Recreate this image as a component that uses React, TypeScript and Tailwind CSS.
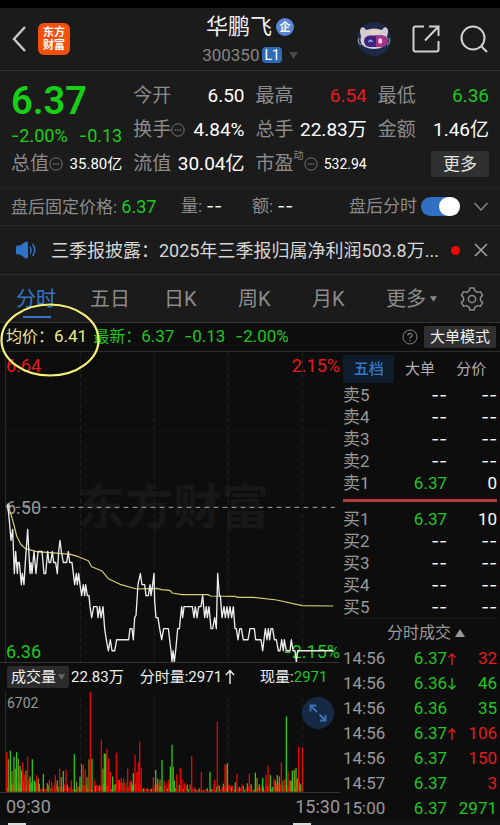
import React from "react";

const RED = "#e31b1b";
const GREEN = "#1fc71f";

/* Minute line: [x, ticks of 0.01 below the previous close] in chart units */
const priceLine: [number, number][] = [
  [24, 0], [28, 1.2], [33, 3], [38, 2], [43, 6], [47, 4], [52, 6], [54, 5], [58, 5], [64, 7], [67, 6], [72, 7], [76, 5], [83, 2],
  [90, 6], [93, 5], [96, 6], [102, 4], [108, 6], [114, 4], [126, 4], [132, 6], [137, 6], [143, 4], [147, 5], [152, 5], [157, 4],
  [161, 5], [167, 5], [172, 6], [176, 4], [180, 3], [184, 4], [190, 5], [200, 5], [205, 4], [209, 5], [216, 5], [220, 6], [224, 7],
  [229, 6], [232, 7], [236, 6], [240, 7], [245, 8], [250, 7], [254, 8], [257, 7], [262, 8], [267, 8], [270, 9], [275, 10], [281, 9],
  [291, 9], [294, 10], [299, 9], [303, 10], [309, 9], [314, 11], [319, 12], [325, 13], [331, 12], [336, 13], [344, 13], [350, 12],
  [386, 12], [390, 11], [396, 11], [400, 12], [404, 10], [408, 9.8], [414, 7], [421, 6], [426, 7], [434, 7], [438, 8], [445, 8],
  [450, 7], [453, 8], [458, 7], [462, 6], [464, 8.5], [468, 10], [474, 10], [479, 11], [485, 12], [491, 11], [505, 11], [509, 12],
  [513, 13], [516, 14], [519, 13], [523, 14], [527, 13], [533, 11], [538, 11], [545, 9], [548, 10], [552, 9], [577, 9], [582, 10],
  [586, 9], [591, 10], [596, 9], [603, 9], [608, 8], [614, 10], [619, 9], [622, 10], [627, 9], [633, 11], [638, 11], [644, 10],
  [649, 11], [653, 6], [658, 8], [661, 8], [666, 10], [672, 9], [676, 10], [681, 9], [685, 10], [690, 9], [695, 10], [700, 9],
  [705, 11], [709, 11], [714, 12], [719, 11], [724, 11], [730, 12], [744, 12], [750, 11], [763, 11], [767, 12], [783, 12], [788, 13],
  [796, 11], [801, 12], [805, 11], [809, 12], [813, 11], [818, 11], [823, 12], [829, 12], [835, 13], [840, 13], [845, 12], [850, 13],
  [853, 12], [859, 13], [870, 13], [874, 12], [879, 13], [885, 13], [889, 14], [893, 13], [1000, 13],
];

/* Average price line: [x, y] in chart units */
const averageLine: [number, number][] = [
  [24, 458], [32, 484], [42, 519], [50, 552], [62, 576], [76, 590], [110, 599], [150, 602], [212, 607], [235, 614], [265, 626],
  [275, 644], [305, 656], [325, 680], [360, 697], [410, 711], [470, 709], [485, 713], [509, 715], [517, 723], [545, 728],
  [625, 728], [632, 732], [705, 733], [713, 736], [760, 736], [830, 744], [907, 761], [1000, 762],
];

/* Volume peaks: [x, height, colour] in volume chart units */
const peaks: [number, number, "r" | "g" | "o"][] = [
  [20, 120, "r"], [25, 98, "o"], [31, 124, "g"], [36, 62, "o"], [42, 106, "g"], [46, 70, "o"], [50, 120, "g"], [55, 100, "o"],
  [60, 78, "g"], [64, 64, "g"], [68, 88, "r"], [73, 52, "r"], [78, 64, "o"], [83, 106, "r"], [90, 46, "g"], [97, 98, "g"],
  [104, 34, "g"], [110, 50, "r"], [115, 40, "o"], [130, 54, "g"], [148, 36, "r"], [155, 30, "r"], [166, 50, "r"], [172, 34, "o"],
  [179, 70, "r"], [184, 44, "o"], [190, 62, "g"], [198, 66, "r"], [214, 34, "r"], [223, 114, "g"], [230, 30, "o"], [240, 46, "g"],
  [245, 84, "o"], [250, 80, "r"], [256, 68, "r"], [261, 44, "o"], [267, 98, "o"], [271, 302, "r"], [276, 100, "g"], [283, 34, "r"],
  [304, 158, "r"], [309, 70, "o"], [313, 116, "g"], [317, 114, "g"], [321, 130, "r"], [326, 100, "r"], [331, 60, "r"],
  [338, 46, "g"], [349, 118, "r"], [356, 36, "r"], [364, 42, "r"], [371, 40, "r"], [383, 70, "r"], [390, 34, "r"], [400, 56, "g"],
  [405, 112, "r"], [410, 60, "r"], [415, 88, "r"], [419, 152, "r"], [424, 72, "r"], [460, 44, "r"], [467, 66, "g"], [473, 40, "o"],
  [480, 36, "o"], [486, 96, "g"], [492, 34, "r"], [506, 36, "r"], [511, 76, "g"], [516, 142, "g"], [520, 74, "o"], [523, 34, "g"],
  [530, 52, "r"], [541, 72, "r"], [546, 38, "r"], [575, 108, "r"], [604, 60, "r"], [630, 60, "g"], [644, 36, "r"], [652, 212, "r"],
  [675, 84, "r"], [678, 80, "r"], [682, 86, "g"], [706, 28, "g"], [711, 54, "r"], [748, 54, "r"], [766, 58, "g"], [771, 42, "o"],
  [788, 42, "g"], [798, 52, "r"], [804, 78, "r"], [811, 50, "g"], [822, 40, "r"], [832, 50, "g"], [838, 46, "o"], [844, 88, "r"],
  [852, 36, "r"], [859, 228, "g"], [864, 62, "r"], [870, 34, "o"], [877, 64, "g"], [883, 66, "o"], [888, 72, "g"], [892, 40, "o"],
  [896, 136, "r"], [907, 134, "r"],
];

const barColour = { r: "#e60505", g: "#28c41c", o: "#84810d" };

/* Low bars between the peaks */
const filler = Array.from({ length: 222 }, (_, i) => {
  const wave = Math.abs(Math.sin(i * 12.9898) * 43758.5453) % 1;
  const x = 20 + i * 4;
  const quiet = (x > 118 && x < 140) || (x > 425 && x < 458) || (x > 585 && x < 640);
  const busy = x < 110 || (x > 340 && x < 395) || x > 820;
  const height = quiet ? 3 + wave * 8 : busy ? 12 + wave * 26 : 4 + wave * 22;
  const colour = i % 7 === 3 ? barColour.g : i % 3 === 0 ? barColour.o : barColour.r;
  return { x, height, colour };
});

const gridX = [241, 463, 685, 907];

/* Outline of the six-toothed settings gear, centred on 12,12 */
const gearPoints = [0, 1, 2, 3, 4, 5]
  .flatMap((k) => [[-19, 8.8], [-11, 11.2], [11, 11.2], [19, 8.8], [30, 8.4]].map(([a, r]) => {
    const angle = ((a + 60 * k - 90) * Math.PI) / 180;
    return `${(12 + r * Math.cos(angle)).toFixed(2)},${(12 + r * Math.sin(angle)).toFixed(2)}`;
  }))
  .join(" ");

/* Digits with a wide minus sign */
function Num({ children }: { children: string }) {
  const digits = children.replace(/^-+/, "");
  const signs = children.slice(0, children.length - digits.length);
  return (
    <>
      {signs && <span className="font-['Inter']">{signs}</span>}
      {digits}
    </>
  );
}

function MoreDots() {
  return (
    <svg viewBox="0 0 14 14" className="size-3.5 shrink-0" fill="none" stroke="#747474">
      <circle cx="7" cy="7" r="6.2" />
      <path d="M3.8 7h1.4M6.3 7h1.4M8.8 7h1.4" strokeWidth="1.3" />
    </svg>
  );
}

function Caret({ className }: { className: string }) {
  return (
    <svg viewBox="0 0 10 8" className={className} fill="currentColor">
      <path d="M0 0h10L5 8z" />
    </svg>
  );
}

function Quote({ label, value, tone = "text-white" }: { label: React.ReactNode; value: string; tone?: string }) {
  return (
    <div className="flex items-center justify-between whitespace-nowrap">
      <dt className="flex items-center text-[#8b8b8b]">{label}</dt>
      <dd className={tone}>{value}</dd>
    </div>
  );
}

function Header() {
  return (
    <header className="grid h-[63px] grid-cols-[1fr_auto_1fr] items-center border-b border-[#333] px-3">
      <div className="flex items-center gap-3">
        <button aria-label="返回">
          <svg viewBox="0 0 14 26" className="h-[26px] w-3.5" fill="none" stroke="#c9c9c9" strokeWidth="2.4">
            <path d="M13 1 2 13l11 12" />
          </svg>
        </button>
        <div className="grid size-8 place-content-center rounded-md bg-[#f4500c] text-center text-[11px] leading-[13px] font-bold text-white">
          <span>东方</span>
          <span>财富</span>
        </div>
      </div>
      <div className="flex flex-col items-center">
        <h1 className="flex items-center gap-1 text-[22px] leading-8 text-[#f0f0f0]">
          华鹏飞
          <span className="grid size-[18px] place-content-center rounded-full bg-[#5b85d6] text-[11px] leading-none font-bold text-white">企</span>
        </h1>
        <div className="flex items-center gap-[3px] text-[17px] leading-6 text-[#858585]">
          300350
          <span className="rounded-sm bg-[#2c6cb4] px-0.5 text-sm leading-4 text-white">L1</span>
          <Caret className="ml-1 h-[7px] w-[9px] text-[#494949]" />
        </div>
      </div>
      <div className="flex items-center justify-end gap-5">
        <button aria-label="智能助手">
          <svg viewBox="0 0 36 36" className="size-9">
            <circle cx="18" cy="18" r="17" fill="#1d2a45" />
            <path d="M5 7q3-2 5 2 8-3 16 0 2-4 5-2 2 3 0 8 3 8-4 11-9 4-18 0-6-3-4-11-2-5 0-8z" fill="#d3ccd4" />
            <path d="M10 11q8-3 17 0-8 3-17 0z" fill="#f0cfc2" />
            <path d="M3 17q-2 4 2 7M33 17q2 4-2 7" fill="none" stroke="#8f8a99" strokeWidth="1.2" />
            <rect x="8" y="14.500" width="24" height="11.500" rx="5.700" fill="#3c2380" />
            <path d="M20 14.500h6a5.750 5.750 0 0 1 0 11.500h-6z" fill="#a03684" />
            <path d="m12.500 21 2-2 2 2" fill="none" stroke="#9fc5ff" strokeWidth="1.200" />
            <rect x="22.500" y="17.500" width="3.500" height="5" rx="1" fill="#ffd5ee" />
          </svg>
        </button>
        <button aria-label="分享">
          <svg viewBox="0 0 28 28" className="size-7" fill="none" stroke="#d2d2d2" strokeWidth="2">
            <path d="M12 1.500H3.500Q1.500 1.500 1.500 3.500v21q0 2 2 2h21q2 0 2-2V16M13 15.500 26 2M17 1.500h9.500v9.500" />
          </svg>
        </button>
        <button aria-label="搜索">
          <svg viewBox="0 0 28 28" className="size-7" fill="none" stroke="#d2d2d2" strokeWidth="2">
            <circle cx="13" cy="13" r="11.500" />
            <path d="m21 21 6 6" />
          </svg>
        </button>
      </div>
    </header>
  );
}

function Summary() {
  return (
    <dl className="grid auto-rows-[34px] grid-cols-4 gap-x-[11px] border-b border-[#232323] px-[11px] pt-2 pb-1.5 text-[19px]">
      <div className="row-span-2 whitespace-nowrap text-[#18cf18]">
        <dt className="text-[38px] leading-[45px] font-semibold">6.37</dt>
        <dd className="flex justify-between text-[18px] leading-6">
          <span><Num>-2.00%</Num></span>
          <span><Num>-0.13</Num></span>
        </dd>
      </div>
      <Quote label="今开" value="6.50" />
      <Quote label="最高" value="6.54" tone="text-[#e31b1b]" />
      <Quote label="最低" value="6.36" tone="text-[#1fc71f]" />
      <Quote label={<>换手<MoreDots /></>} value="4.84%" />
      <Quote label="总手" value="22.83万" />
      <Quote label="金额" value="1.46亿" />
      <Quote label={<>总值<MoreDots /></>} value="35.80亿" tone="text-[15px] text-white" />
      <Quote label="流值" value="30.04亿" />
      <Quote
        label={<>市盈<sup className="-top-2 text-[10px]">动</sup><MoreDots /></>}
        value="532.94"
        tone="text-sm text-white"
      />
      <div className="flex items-center justify-end">
        <button className="h-[26px] rounded-xs bg-[#303030] px-3 text-[17px] leading-[26px] text-[#e4e4e4]">更多</button>
      </div>
    </dl>
  );
}

function AfterHours() {
  return (
    <div className="flex h-[38px] items-center border-b border-[#272727] pr-3 pl-[11px] text-[17px] whitespace-nowrap text-[#8b8b8b]">
      <span className="flex-[170]">
        盘后固定价格: <span className="text-[18px] text-[#1fc71f]">6.37</span>
      </span>
      <span className="flex-[71]">量: <span className="text-white"><Num>--</Num></span></span>
      <span className="flex-[97]">额: <span className="text-white"><Num>--</Num></span></span>
      <label className="flex items-center gap-1">
        盘后分时
        <input
          type="checkbox"
          defaultChecked
          className="flex h-[19px] w-[39px] appearance-none justify-end rounded-full bg-[#2f70c4] after:h-[19px] after:w-[21px] after:rounded-full after:bg-white after:content-['']"
        />
      </label>
      <button aria-label="展开" className="ml-3.5">
        <svg viewBox="0 0 14 10" className="h-2.5 w-3.5" fill="none" stroke="#8b8b8b" strokeWidth="1.300">
          <path d="m.5 1 6.500 7 6.500-7" />
        </svg>
      </button>
    </div>
  );
}

function News() {
  return (
    <div className="flex h-[49px] items-center border-b border-[#303030] pr-3 pl-4 text-[18px] text-[#d6d6d6]">
      <svg viewBox="0 0 20 18" className="h-[18px] w-5 shrink-0" fill="#2f74c8">
        <path d="M0 6q0-1.500 1.500-1.500H4L9.500.7Q12 0 12 2v14q0 2-2.500 1.300L4 13.500H1.500Q0 13.500 0 12z" />
        <path d="M14 5.500q2 3.500 0 7M16.500 3q4.500 6 0 12" fill="none" stroke="#2f74c8" strokeWidth="1.500" />
      </svg>
      <a href="#news" className="ml-[15px] min-w-0 flex-1 truncate">三季报披露：2025年三季报归属净利润503.8万...</a>
      <span className="mr-3.5 ml-2.5 size-[9px] rounded-full bg-[#f50606]" />
      <button aria-label="关闭">
        <svg viewBox="0 0 14 14" className="size-3.5" fill="none" stroke="#a5a5a5" strokeWidth="1.500">
          <path d="m1 1 12 12M13 1 1 13" />
        </svg>
      </button>
    </div>
  );
}

function Periods() {
  return (
    <nav className="flex h-12 items-center border-b border-[#333] px-4 text-xl text-[#8b8b8b]">
      <button className="relative h-full flex-1 text-left text-[#3677c8]">
        分时
        <span className="absolute bottom-1 left-[7px] h-0.5 w-7 bg-[#3677c8]" />
      </button>
      {["五日", "日K", "周K", "月K"].map((name) => (
        <button key={name} className="flex-1 text-left">{name}</button>
      ))}
      <button className="flex flex-1 items-center gap-1 text-left whitespace-nowrap">
        更多
        <Caret className="h-1.5 w-[7px]" />
      </button>
      <button aria-label="设置">
        <svg viewBox="0 0 24 24" className="size-6" fill="none" stroke="#8b8b8b" strokeWidth="1.500" strokeLinejoin="round">
          <polygon points={gearPoints} />
          <circle cx="12" cy="12" r="3.600" />
        </svg>
      </button>
    </nav>
  );
}

function Readout() {
  return (
    <div className="relative flex h-[29px] items-center border-b border-[#2c2c2c] pr-1 pl-1.5 text-[17px] whitespace-nowrap text-[#1fc71f]">
      <span className="text-[#eee78a]"><span className="text-base">均价：</span>6.41</span>
      <span className="ml-1.5"><span className="text-base">最新：</span>6.37</span>
      <span className="ml-2.5"><Num>-0.13</Num></span>
      <span className="ml-2.5 flex-1"><Num>-2.00%</Num></span>
      <button aria-label="说明" className="mr-1.5">
        <svg viewBox="0 0 16 16" className="size-4" fill="none" stroke="#808080">
          <circle cx="8" cy="8" r="7" />
          <path d="M5.800 6.500Q6 4.300 8 4.300t2.200 1.900Q10.200 7.300 8 8.500v1.200M8 11v1.200" strokeWidth="1.200" />
        </svg>
      </button>
      <button className="h-[22px] rounded-xs bg-[#303030] px-1.5 text-[15px] leading-[22px] text-[#f0f0f0]">大单模式</button>
      {/* Hand-drawn marker around the average price */}
      <svg viewBox="0 0 100 74" className="pointer-events-none absolute -top-5 left-0 z-10 h-[74px] w-[100px]" fill="none">
        <ellipse cx="50" cy="37" rx="48.500" ry="35.500" stroke="#f7f17c" strokeWidth="2.200" />
      </svg>
    </div>
  );
}

function PriceChart() {
  const line = priceLine.map(([x, t]) => `${x},${466 + t * 33.1}`).join(" ");
  const average = averageLine.map((p) => p.join(",")).join(" ");
  return (
    <div className="relative h-[311px] border-b border-[#333] text-[18px] leading-5">
      <div className="absolute inset-x-0 top-[128px] pl-1.5 text-center text-5xl leading-[56px] font-bold text-[#171717]">东方财富</div>
      <svg viewBox="0 0 1020 930" preserveAspectRatio="none" className="absolute inset-0 size-full" fill="none">
        <path d="M17 0V930" stroke="#2e2e2e" strokeWidth="3" />
        {gridX.map((x) => (
          <path key={x} d={`M${x} 0V930`} stroke="#252525" strokeWidth="3" strokeDasharray="14 8" />
        ))}
        <path d="M17 235H1005" stroke="#161616" strokeWidth="3" />
        <path d="M20 466H1005" stroke="#a8a8a8" strokeWidth="3" strokeDasharray="14 13" />
      </svg>
      <span className="absolute top-1 left-1.5 text-[#e31b1b]">6.64</span>
      <span className="absolute top-1 right-0 text-[#e31b1b]">2.15%</span>
      <span className="absolute top-[146px] left-1.5 text-[#999]">6.50</span>
      <span className="absolute bottom-0 left-1.5 text-[#1fc71f]">6.36</span>
      <span className="absolute right-0 bottom-0 text-[#1fc71f]"><Num>-2.15%</Num></span>
      <svg viewBox="0 0 1020 930" preserveAspectRatio="none" className="absolute inset-0 size-full" fill="none" strokeLinejoin="round">
        <polyline points={average} stroke="#d5cf72" strokeWidth="3.500" />
        <polyline points={line} stroke="#ededed" strokeWidth="4" />
        <path d="M18 462l6-9 6 9-6 9z" fill="#d8d8b8" />
      </svg>
    </div>
  );
}

function VolumeChart() {
  return (
    <>
      <div className="flex h-7 items-center pl-[7px] text-[15px] whitespace-nowrap text-[#f0f0f0]">
        <button className="flex h-[22px] items-center gap-0.5 rounded-xs bg-[#2b2b2b] px-1">
          成交量
          <Caret className="h-1.5 w-[7px] text-[#666]" />
        </button>
        <span className="ml-0.5">22.83万</span>
        <span className="ml-4 flex items-center">
          分时量:2971
          <svg viewBox="0 0 12 16" className="ml-0.5 h-4 w-3" fill="none" stroke="currentColor" strokeWidth="1.400">
            <path d="M6 15V2M2 6l4-4.500L10 6" />
          </svg>
        </span>
        <span className="ml-6">现量:<span className="text-[#1fc71f]">2971</span></span>
      </div>
      <div className="relative h-[102px] border-b border-[#333]">
        <svg viewBox="0 0 1020 306" preserveAspectRatio="none" className="absolute inset-0 size-full">
          <path d="M17 0V306" stroke="#2e2e2e" strokeWidth="3" />
          {gridX.map((x) => (
            <path key={x} d={`M${x} 18V306`} stroke="#252525" strokeWidth="3" strokeDasharray="14 8" />
          ))}
          {filler.map((b) => (
            <rect key={b.x} x={b.x} y={305 - b.height} width="4" height={b.height} fill={b.colour} />
          ))}
          {peaks.map(([x, h, c]) => (
            <rect key={x} x={x - 2} y={305 - h} width="4" height={h} fill={barColour[c]} />
          ))}
        </svg>
        <span className="absolute top-0.5 left-[7px] text-sm leading-5 text-[#999]">6702</span>
        <button aria-label="放大图表" className="absolute top-1.5 right-1.5 grid size-8 place-content-center rounded-full bg-[#172a45]">
          <svg viewBox="0 0 18 18" className="size-[18px]" fill="none" stroke="#3a72b8" strokeWidth="1.800">
            <path d="M8 8 2 2M1.500 7.500v-6h6M10.500 10.500l6 6M16.500 11v5.500H11" />
          </svg>
        </button>
      </div>
      <div className="flex justify-between pl-1.5 text-[18px] leading-7 text-[#999]">
        <time>09:30</time>
        <time>15:30</time>
      </div>
    </>
  );
}

const asks = [["卖5"], ["卖4"], ["卖3"], ["卖2"], ["卖1", "6.37", "0"]];
const bids = [["买1", "6.37", "10"], ["买2"], ["买3"], ["买4"], ["买5"]];

const trades: [string, string, string, string, string][] = [
  ["14:56", "6.37", "up", "32", RED],
  ["14:56", "6.36", "down", "46", GREEN],
  ["14:56", "6.36", "", "35", GREEN],
  ["14:56", "6.37", "up", "106", RED],
  ["14:56", "6.37", "", "150", RED],
  ["14:57", "6.37", "", "3", RED],
  ["15:00", "6.37", "", "2971", GREEN],
];

function Columns() {
  return (
    <colgroup>
      <col className="w-[54px]" />
      <col className="w-[50px]" />
      <col className="w-[11px]" />
      <col />
    </colgroup>
  );
}

function Levels({ rows }: { rows: string[][] }) {
  return (
    <table className="w-full table-fixed text-[17px] leading-[22px]">
      <Columns />
      <tbody>
        {rows.map(([name, price = "--", volume = "--"]) => (
          <tr key={name}>
            <th className="text-left font-normal text-[#999]">{name}</th>
            <td className={price === "--" ? "text-right text-white" : "text-right text-[#1fc71f]"}><Num>{price}</Num></td>
            <td />
            <td className="text-right text-white"><Num>{volume}</Num></td>
          </tr>
        ))}
      </tbody>
    </table>
  );
}

function OrderBook() {
  return (
    <aside className="w-40 shrink-0 px-[3px] pt-[3px]">
      <div className="mb-px grid h-7 grid-cols-3 text-[15px] whitespace-nowrap text-[#b0b0b0]">
        <button className="rounded-xs bg-[#0f1c2c] font-medium text-[#3677c8]">五档</button>
        <button>大单</button>
        <button>分价</button>
      </div>
      <Levels rows={asks} />
      <div className="mt-[5px] mb-1.5 h-[3px] bg-[#b43a40]" />
      <Levels rows={bids} />
      <button className="flex h-7 w-full items-center justify-center gap-1 border-t border-[#1d1d1d] pl-3 text-base text-[#999]">
        分时成交
        <Caret className="h-2 w-2.5 rotate-180" />
      </button>
      <table className="w-full table-fixed text-[17px] leading-[25px]">
        <Columns />
        <tbody>
          {trades.map(([time, price, move, volume, colour], i) => (
            <tr key={i}>
              <td className="text-[#999]">{time}</td>
              <td className="text-right text-[#1fc71f]">{price}</td>
              <td>
                {move && (
                  <svg
                    viewBox="0 0 10 14"
                    className={move === "up" ? "h-3.5 w-2.5" : "h-3.5 w-2.5 rotate-180"}
                    fill="none"
                    stroke={move === "up" ? RED : GREEN}
                    strokeWidth="1.400"
                  >
                    <path d="M5 13V2M1.500 5.500 5 2l3.500 3.500" />
                  </svg>
                )}
              </td>
              <td className="text-right" style={{ color: colour }}>{volume}</td>
            </tr>
          ))}
        </tbody>
      </table>
    </aside>
  );
}

export default function App() {
  return (
    <main className="overflow-hidden bg-[#0d0d0d] font-['Roboto','Noto_Sans_CJK_SC',sans-serif]">
      <div className="h-2 bg-black" />
      <div className="bg-[#1b1b1b]">
        <Header />
        <Summary />
        <AfterHours />
        <News />
        <Periods />
      </div>
      <Readout />
      <div className="flex">
        <section className="min-w-0 flex-1">
          <PriceChart />
          <VolumeChart />
        </section>
        <OrderBook />
      </div>
      <div className="flex h-1 items-end bg-[#101216] pl-2">
        <span className="h-0.5 w-[18px] bg-[#ddd]" />
        <span className="ml-[267px] h-0.5 w-[18px] bg-[#ddd]" />
      </div>
    </main>
  );
}
